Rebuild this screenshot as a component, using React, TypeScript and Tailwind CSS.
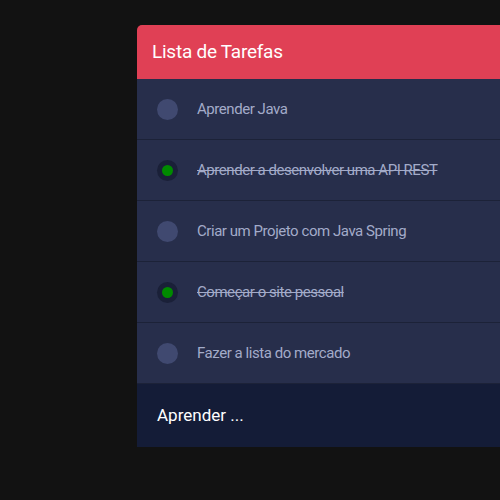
const tasks = [
  { text: 'Aprender Java', done: false },
  { text: 'Aprender a desenvolver uma API REST', done: true },
  { text: 'Criar um Projeto com Java Spring', done: false },
  { text: 'Começar o site pessoal', done: true },
  { text: 'Fazer a lista do mercado', done: false },
]

export default function App() {
  return (
    <div className="h-[500px] w-[500px] overflow-hidden bg-[#121212] pt-[25px] pl-[137px] font-['Roboto',sans-serif]">
      <div className="w-[420px] overflow-hidden rounded-tl-[5px]">
        {/* Header */}
        <div className="flex h-[54px] items-center bg-[#e04055] px-[15px]">
          <h1 className="text-[19px] tracking-[-0.25px] text-white">Lista de Tarefas</h1>
        </div>

        <ul>
          {tasks.map((task) => (
            <li
              key={task.text}
              className="flex h-[61px] items-center border-b border-[#1c2238] bg-[#272e4b] pl-[20px]"
            >
              {task.done ? (
                <span className="flex h-[21px] w-[21px] items-center justify-center rounded-full bg-[#1a2038]">
                  <span className="h-[11px] w-[11px] rounded-full bg-[#008a00]" />
                </span>
              ) : (
                <span className="h-[21px] w-[21px] rounded-full bg-[#404970]" />
              )}
              <span
                className={`ml-[19px] text-[15px] tracking-[-0.45px] text-[#a3abc9] ${task.done ? 'line-through' : ''}`}
              >
                {task.text}
              </span>
            </li>
          ))}
        </ul>

        {/* Input */}
        <div className="flex h-[63px] items-center bg-[#141c37] px-[20px]">
          <span className="text-[17px] text-white">Aprender ...</span>
        </div>
      </div>
    </div>
  )
}
